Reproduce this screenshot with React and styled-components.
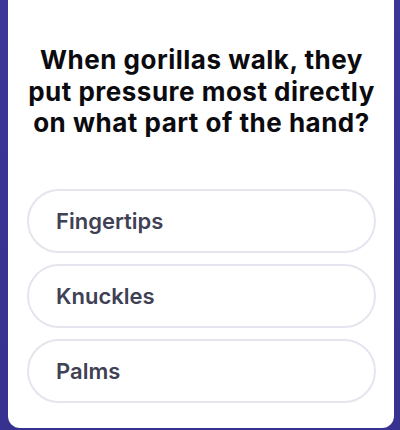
import React from "react";
import styled, { createGlobalStyle } from "styled-components";

const Global = createGlobalStyle`
  html, body { margin: 0; padding: 0; }
  body {
    width: 400px;
    height: 430px;
    overflow: hidden;
    background: #3a3595;
    font-family: "Inter", "Open Sans", sans-serif;
  }
`;

const Page = styled.div`
  width: 400px;
  height: 430px;
  padding: 0 6px 2px 8px;
  box-sizing: border-box;
  display: flex;
  background: linear-gradient(180deg, #3b3697 0%, #37328f 100%);
`;

const Card = styled.div`
  flex: 1;
  background: #ffffff;
  border-radius: 0 0 12px 12px;
  padding: 44px 18px 0 19px;
  display: flex;
  flex-direction: column;
`;

const Question = styled.h1`
  margin: 0 0 50px;
  font-size: 26px;
  line-height: 31.5px;
  font-weight: 700;
  color: #0b0b0f;
  text-align: center;
  letter-spacing: 0.5px;
  white-space: nowrap;
`;

const Options = styled.div`
  display: flex;
  flex-direction: column;
  gap: 11px;
`;

const Option = styled.div`
  height: 64px;
  box-sizing: border-box;
  border: 2px solid #e6e5ef;
  border-radius: 32px;
  display: flex;
  align-items: center;
  padding-left: 27px;
  font-size: 22px;
  font-weight: 600;
  color: #3f4154;
`;

export default function App() {
  const options = ["Fingertips", "Knuckles", "Palms"];
  return (
    <>
      <Global />
      <Page>
        <Card>
          <Question>
            When gorillas walk, they
            <br />
            put pressure most directly
            <br />
            on what part of the hand?
          </Question>
          <Options>
            {options.map((o) => (
              <Option key={o}>{o}</Option>
            ))}
          </Options>
        </Card>
      </Page>
    </>
  );
}
